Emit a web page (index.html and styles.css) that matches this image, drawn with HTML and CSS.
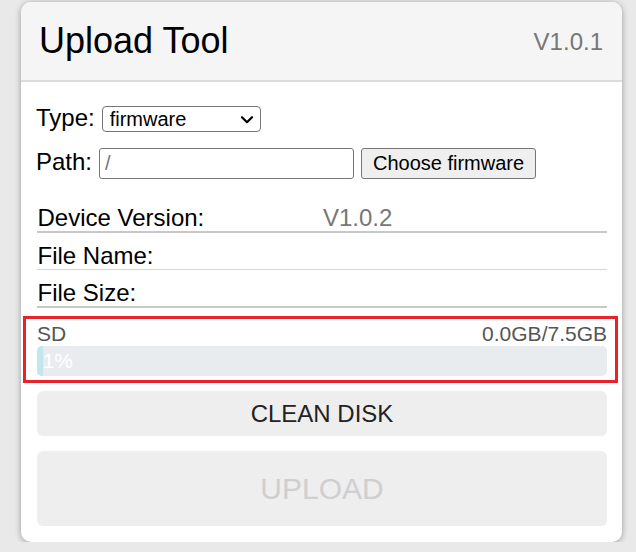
FILE: index.html
```html
<!DOCTYPE html>
<html lang="en">
<head>
<meta charset="utf-8">
<title>Upload Tool</title>
<link rel="stylesheet" href="styles.css">
</head>
<body>
<div class="card">
  <div class="header">
    <h1 class="title">Upload Tool</h1>
    <span class="version">V1.0.1</span>
  </div>
  <div class="content">
    <div class="form-row type-row">
      <label class="form-label">Type:</label>
      <div class="select">
        <span class="select-text">firmware</span>
        <svg class="chevron" width="12" height="8" viewBox="0 0 12 8"><polyline points="1,1.2 6,6.2 11,1.2" fill="none" stroke="#000" stroke-width="2.2" stroke-linecap="round" stroke-linejoin="round"/></svg>
      </div>
    </div>
    <div class="form-row path-row">
      <label class="form-label">Path:</label>
      <input class="path-input" type="text" placeholder="/">
      <button class="choose-btn" type="button">Choose firmware</button>
    </div>
    <div class="info">
      <div class="info-row thick"><span class="info-label">Device Version:</span><span class="info-value">V1.0.2</span></div>
      <div class="info-row thin"><span class="info-label">File Name:</span></div>
      <div class="info-row thick"><span class="info-label">File Size:</span></div>
    </div>
    <div class="sd-box">
      <div class="sd-head"><span>SD</span><span>0.0GB/7.5GB</span></div>
      <div class="progress">
        <div class="progress-fill" style="width:1%"></div>
        <span class="progress-text">1%</span>
      </div>
    </div>
    <button class="btn clean-btn" type="button">CLEAN DISK</button>
    <button class="btn upload-btn" type="button" disabled>UPLOAD</button>
  </div>
</div>
</body>
</html>
```

FILE: styles.css
```css
* { box-sizing: border-box; }

html, body {
  margin: 0;
  padding: 0;
}

body {
  background: #e9e9e9;
  font-family: "Liberation Sans", Arial, sans-serif;
  color: #000;
  padding: 2px 0 0 21px;
}

.card {
  width: 601px;
  height: 540px;
  background: #fff;
  border-radius: 10px;
  box-shadow: 0 1px 6px rgba(0, 0, 0, 0.35);
  overflow: hidden;
}

.header {
  height: 80px;
  background: #f5f5f5;
  border-bottom: 2px solid #dcdcdc;
  display: flex;
  align-items: center;
  justify-content: space-between;
  padding: 0 19px 0 18px;
}

.title {
  margin: 0;
  font-size: 36px;
  font-weight: normal;
  color: #000;
}

.version {
  font-size: 24px;
  color: #777;
  padding-top: 2px;
}

.content {
  padding: 24px 15px 16px 16px;
}

.form-row {
  display: flex;
  align-items: center;
  margin-left: -1px;
}

.type-row {
  height: 26px;
  margin-bottom: 16px;
}

.path-row {
  height: 31px;
  margin-bottom: 16px;
}

.form-label {
  font-size: 24px;
  margin-bottom: 3px;
}

.type-row .form-label { margin-right: 7px; }
.path-row .form-label { margin-right: 7px; }

.select {
  width: 159px;
  height: 26px;
  border: 1px solid #767676;
  border-radius: 4px;
  display: flex;
  align-items: center;
  justify-content: space-between;
  padding: 0 7px 0 7px;
  background: #fff;
}

.select-text {
  font-size: 20px;
  padding-top: 1px;
}

.chevron {
  display: block;
  margin-top: 1px;
}

.path-input {
  width: 255px;
  height: 31px;
  border: 1px solid #767676;
  border-radius: 3px;
  font-family: "Liberation Sans", Arial, sans-serif;
  font-size: 20px;
  padding: 0 5px;
  margin: 0 7px 0 0;
  outline: none;
}

.path-input::placeholder {
  color: #757575;
}

.choose-btn {
  width: 175px;
  height: 31px;
  border: 1px solid #767676;
  border-radius: 3px;
  background: #efefef;
  font-family: "Liberation Sans", Arial, sans-serif;
  font-size: 20px;
  color: #000;
  padding: 0;
  margin: 0;
}

.info-row {
  display: flex;
  height: 38px;
  padding-top: 9px;
  line-height: 27px;
  font-size: 24px;
}

.info-row.thick {
  border-bottom: 2px solid #c8c8c8;
}

.info-row.thin {
  height: 37px;
  border-bottom: 1px solid #d6d6d6;
}

.info-label {
  width: 286px;
  flex: none;
  padding-left: 0.5px;
}

.info-value {
  color: #777;
}

.sd-box {
  margin: 8px -11px 8px -14px;
  border: 3px solid #e8222b;
  padding: 0 8px 4px 11px;
}

.sd-head {
  display: flex;
  justify-content: space-between;
  font-size: 21px;
  line-height: 23px;
  padding-top: 3px;
  padding-bottom: 1px;
  color: #555;
}

.progress {
  height: 30px;
  background: #e9ecef;
  border-radius: 5px;
  overflow: hidden;
  display: flex;
  align-items: center;
}

.progress-fill {
  height: 100%;
  background: #c2e6ee;
  flex: none;
}

.progress-text {
  color: #fff;
  font-size: 21px;
  line-height: 30px;
}

.btn {
  display: block;
  width: 100%;
  border: none;
  border-radius: 6px;
  background: #eeeeee;
  font-family: "Liberation Sans", Arial, sans-serif;
  padding: 0;
  margin: 0;
}

.clean-btn {
  height: 45px;
  font-size: 24px;
  color: #222;
  margin-bottom: 15px;
}

.upload-btn {
  height: 75px;
  font-size: 30px;
  color: #cfcfcf;
}
```
